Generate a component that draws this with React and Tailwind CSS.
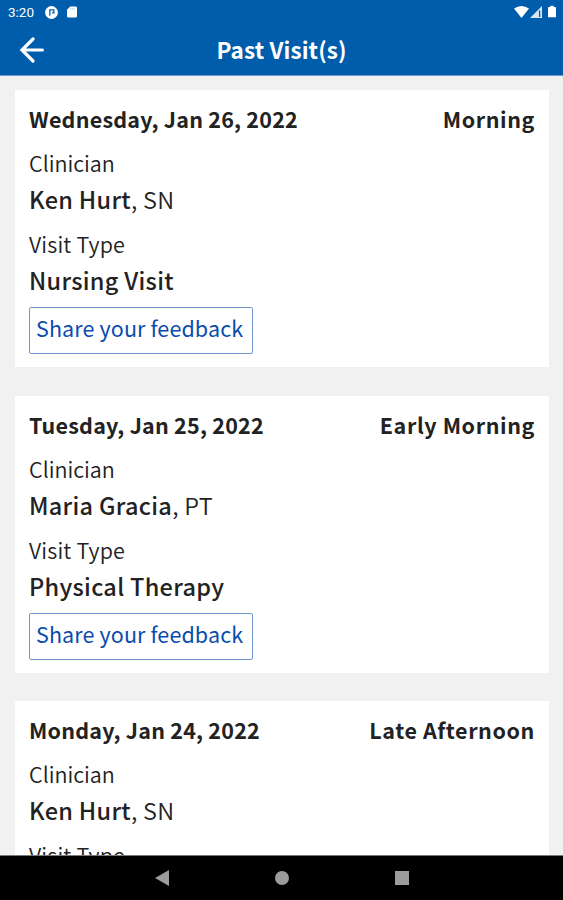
import React from "react";

const visits = [
  {
    date: "Wednesday, Jan 26, 2022",
    time: "Morning",
    clinician: "Ken Hurt",
    title: "SN",
    type: "Nursing Visit",
  },
  {
    date: "Tuesday, Jan 25, 2022",
    time: "Early Morning",
    clinician: "Maria Gracia",
    title: "PT",
    type: "Physical Therapy",
  },
  {
    date: "Monday, Jan 24, 2022",
    time: "Late Afternoon",
    clinician: "Ken Hurt",
    title: "SN",
  },
];

const StatusBar = () => (
  <div className="flex h-6 items-center justify-between pl-2 pr-[7px] text-white">
    <div className="flex items-center">
      <span className="w-[37px] font-['Roboto',sans-serif] text-[13.5px] leading-6">
        3:20
      </span>
      <svg className="h-[13px] w-[13px]" viewBox="0 0 14 14">
        <circle cx="7" cy="7" r="6.9" fill="#fff" />
        <path d="M5.2 10.4V4.2H9.6V7.4H7.4" fill="none" stroke="#005dab" strokeWidth="1.3" />
      </svg>
      <svg className="ml-[9px] h-3 w-[10px]" viewBox="0 0 11 12">
        <path d="M3.6 0H9.8Q11 0 11 1.2V10.8Q11 12 9.8 12H1.2Q0 12 0 10.8V3.6Z" fill="#fff" />
        <path d="M3.8 1.8V3.6M5.8 1.8V3.6M7.8 1.8V3.6" stroke="#9fc0df" strokeWidth="0.8" />
      </svg>
    </div>
    <div className="flex items-center pb-px">
      <svg className="h-3 w-[15px]" viewBox="0 0 15 12">
        <path d="M0 2.6Q7.5 -2.4 15 2.6L7.5 12Z" fill="#fff" />
      </svg>
      <svg className="ml-px h-3 w-3" viewBox="0 0 12 12">
        <path d="M12 0V12H0Z" fill="#fff" fillOpacity="0.85" />
        <path d="M9.6 4.4V11" stroke="#005dab" strokeWidth="1.3" />
      </svg>
      <svg className="ml-[6px] h-[13px] w-[8px]" viewBox="0 0 9 13">
        <path d="M2.7 0H6.3V1.3H8Q9 1.3 9 2.3V12Q9 13 8 13H1Q0 13 0 12V2.3Q0 1.3 1 1.3H2.7Z" fill="#fff" />
      </svg>
    </div>
  </div>
);

const VisitCard = ({ visit }) => (
  <div className="h-[277px] shrink-0 bg-white px-[14.5px] pt-[11px] text-[21.5px] leading-9 text-[#222]">
    <div className="flex justify-between font-bold">
      <span className="tracking-[0.22px]">{visit.date}</span>
      <span className="-mr-px tracking-[0.6px]">{visit.time}</span>
    </div>
    <p className="mt-2 font-[350]">Clinician</p>
    <p className="text-[23.5px] font-medium tracking-[0.3px]">
      {visit.clinician}
      <span className="font-[350]">, {visit.title}</span>
    </p>
    <p className="mt-[9px] font-[350] tracking-[0.15px]">Visit Type</p>
    {visit.type && (
      <>
        <p className="text-[23.5px] font-medium tracking-[0.3px]">{visit.type}</p>
        <button className="mt-[9px] block h-[47px] w-56 rounded-xs border border-[#7197cf] pb-[5px] pl-[6px] text-left tracking-[0.12px] text-[#0a4cae]">
          Share your feedback
        </button>
      </>
    )}
  </div>
);

const App = () => {
  return (
    <div className="flex h-[900px] w-[563px] flex-col overflow-hidden bg-[#f1f1f1] font-['Noto_Sans_CJK_SC',sans-serif]">
      {/* Header */}
      <header className="h-[76px] shrink-0 border-b border-[#6a9bd0] bg-[#005dab]">
        <StatusBar />
        <div className="grid h-[51px] grid-cols-[60px_1fr_60px] items-center text-white">
          <button className="pl-[19px]" aria-label="Back">
            <svg className="h-[26px] w-[25px]" viewBox="0 0 25 26" fill="none" stroke="#fff" strokeWidth="3.2" strokeLinecap="round">
              <path d="M14 2L3 13L14 24M3 13H23.4" />
            </svg>
          </button>
          <h1 className="pb-[2px] text-center text-[22.5px] leading-9 font-bold tracking-[0.1px]">
            Past Visit(s)
          </h1>
        </div>
      </header>

      {/* Visits */}
      <main className="flex min-h-0 flex-1 flex-col gap-[28.7px] overflow-hidden px-[14.5px] pt-[14px]">
        {visits.map((visit) => (
          <VisitCard key={visit.date} visit={visit} />
        ))}
      </main>

      {/* Navigation bar */}
      <nav className="flex h-[45px] shrink-0 items-center justify-center gap-[106px] border-t border-[#777] bg-black">
        <svg className="h-4 w-[14px]" viewBox="0 0 14 16">
          <path d="M14 0V16L0 8Z" fill="#9c9c9c" />
        </svg>
        <span className="h-[14px] w-[14px] rounded-full bg-[#9c9c9c]" />
        <span className="h-[14px] w-[14px] bg-[#9c9c9c]" />
      </nav>
    </div>
  );
};

export default App;
